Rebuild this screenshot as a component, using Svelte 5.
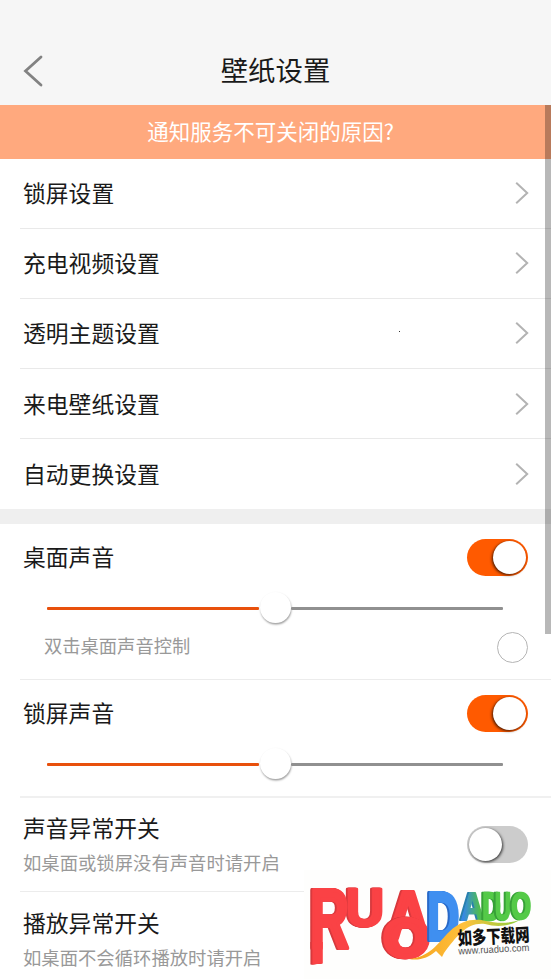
<script lang="ts">
	interface LogoLetter {
		char: string;
		tone: string;
		x: number;
		y: number;
		sx: number;
		sy: number;
		weight: number;
	}

	const links = ['锁屏设置', '充电视频设置', '透明主题设置', '来电壁纸设置', '自动更换设置'];

	let desktopSound = $state(true);
	let lockSound = $state(true);
	let soundFix = $state(false);
	let doubleTap = $state(false);

	// x / y is the baseline origin, sx / sy stretch a 100 unit glyph
	const letters: LogoLetter[] = [
		{ char: 'A', tone: 'red', x: 83.5, y: 68, sx: 0.58, sy: 0.66, weight: 6 },
		{ char: 'U', tone: 'red', x: 42, y: 56, sx: 0.53, sy: 0.53, weight: 5 },
		{ char: 'R', tone: 'red', x: 6, y: 78, sx: 0.54, sy: 0.83, weight: 5 },
		{ char: 'O', tone: 'red', x: 80, y: 86, sx: 0.58, sy: 0.51, weight: 11 },
		{ char: 'D', tone: 'blue', x: 123.5, y: 70, sx: 0.44, sy: 0.69, weight: 6 },
		{ char: 'A', tone: 'teal', x: 157, y: 50, sx: 0.32, sy: 0.38, weight: 5 },
		{ char: 'D', tone: 'green', x: 178.5, y: 50, sx: 0.25, sy: 0.38, weight: 7 },
		{ char: 'U', tone: 'green', x: 191, y: 50, sx: 0.22, sy: 0.38, weight: 6 },
		{ char: 'O', tone: 'green', x: 207.5, y: 49, sx: 0.25, sy: 0.37, weight: 7 }
	];
</script>

{#snippet toggle(on: boolean, label: string, flip: () => void)}
	<button class="toggle" class:on role="switch" aria-checked={on} aria-label={label} onclick={flip}>
		<span></span>
	</button>
{/snippet}

{#snippet slider()}
	<div class="slider">
		<span class="track filled"></span>
		<span class="thumb"></span>
		<span class="track"></span>
	</div>
{/snippet}

<main class="screen">
	<header>
		<svg class="back" viewBox="0 0 22 34" aria-hidden="true">
			<path d="M19 3 L3.5 17 L19 31" />
		</svg>
		<h1>壁纸设置</h1>
	</header>

	<div class="banner">通知服务不可关闭的原因?</div>

	<nav>
		{#each links as link}
			<div class="link">
				<span>{link}</span>
				<svg viewBox="0 0 14 24" aria-hidden="true"><path d="M1.2 1.8 L12.2 12 L1.2 22.2" /></svg>
			</div>
		{/each}
	</nav>

	<div class="gap"></div>

	<section class="sound desktop">
		<div class="line">
			<span>桌面声音</span>
			{@render toggle(desktopSound, '桌面声音', () => (desktopSound = !desktopSound))}
		</div>
		{@render slider()}
		<div class="option">
			<span>双击桌面声音控制</span>
			<button
				class="radio"
				class:checked={doubleTap}
				aria-label="双击桌面声音控制"
				onclick={() => (doubleTap = !doubleTap)}
			></button>
		</div>
	</section>

	<section class="sound lock">
		<div class="line">
			<span>锁屏声音</span>
			{@render toggle(lockSound, '锁屏声音', () => (lockSound = !lockSound))}
		</div>
		{@render slider()}
	</section>

	<section class="fix">
		<div>
			<p>声音异常开关</p>
			<small>如桌面或锁屏没有声音时请开启</small>
		</div>
		{@render toggle(soundFix, '声音异常开关', () => (soundFix = !soundFix))}
	</section>

	<section class="fix last">
		<div>
			<p>播放异常开关</p>
			<small>如桌面不会循环播放时请开启</small>
		</div>
	</section>

	<div class="scrollbar"></div>
	<i class="speck"></i>

	<svg class="logo" viewBox="0 0 247 109" aria-hidden="true">
		<defs>
			<linearGradient id="ribbon" x1="0" x2="1">
				<stop offset="0" stop-color="#f5a21f" />
				<stop offset="0.5" stop-color="#ffc13c" />
				<stop offset="1" stop-color="#8ccf3d" />
			</linearGradient>
			<linearGradient id="teal" x1="0" x2="1">
				<stop offset="0.1" stop-color="#3688e5" />
				<stop offset="0.8" stop-color="#4fbd50" />
			</linearGradient>
		</defs>
		{#each letters as l}
			<g class={l.tone}>
				<text transform="translate({l.x} {l.y}) scale({l.sx} {l.sy})" stroke-width={l.weight}>{l.char}</text>
				{#if l.char === 'R'}
					<path class="stem" d="M8.4 72 H18.8 V93.5 L8.4 94.5 Z" />
				{/if}
			</g>
		{/each}
		<path
			class="ribbon"
			d="M105 89 C126 87 134 73 145 62 C160 48 172 49 182 51 C195 54 206 53 216 50 C204 57 192 57 181 54 C163 52 153 66 140 83 L138 87 L132 81 C124 88 115 91 105 89 Z"
		/>
		<g transform="rotate(-3 154 76)">
			<text class="cn" transform="translate(154 75) scale(1 1.15)" textLength="72" lengthAdjust="spacingAndGlyphs">如多下载网</text>
			<text class="url" x="154" y="84.5" textLength="71" lengthAdjust="spacingAndGlyphs">www.ruaduo.com</text>
		</g>
	</svg>
</main>

<style>
	:global(body) {
		overflow: hidden;
	}

	.screen {
		position: relative;
		width: 551px;
		height: 979px;
		overflow: hidden;
		background: #fff;
		color: #1a1a1a;
		font: 22.8px/32px 'Noto Sans CJK SC', sans-serif;
	}

	header {
		display: grid;
		grid-template-columns: 80px 1fr 80px;
		align-items: center;
		height: 105px;
		padding-top: 36px;
		box-sizing: border-box;
		background: #f6f6f6;
	}

	.back {
		width: 22px;
		height: 34px;
		margin-left: 22px;
	}

	svg path {
		fill: none;
	}

	.back path {
		stroke: #828282;
		stroke-width: 2.8;
		stroke-linecap: round;
	}

	h1 {
		margin: 0 0 3px;
		font-size: 27.4px;
		font-weight: 400;
		line-height: 36px;
		text-align: center;
	}

	.banner {
		height: 53.5px;
		background: #ffa97e;
		color: #fff;
		font-size: 21.5px;
		line-height: 52px;
		text-align: center;
		padding-right: 10px;
	}

	.link {
		display: flex;
		align-items: center;
		justify-content: space-between;
		box-sizing: border-box;
		height: 70.2px;
		margin-left: 20px;
		padding: 0 22px 0 3px;
		border-bottom: 1px solid #e9e9e9;
	}

	.link:last-child {
		border-bottom: 0;
	}

	.link svg {
		width: 14px;
		height: 24px;
	}

	.link path {
		stroke: #b3b3b3;
		stroke-width: 2;
	}

	.gap {
		height: 14.5px;
		background: #efefef;
	}

	section {
		box-sizing: border-box;
		margin-left: 20px;
		padding: 0 23px 0 3px;
		border-bottom: 1px solid #ececec;
	}

	.sound {
		padding-top: 16px;
	}

	.desktop {
		height: 156px;
	}

	.lock {
		height: 118px;
		border-bottom: 2px solid #f0f0f0;
	}

	.line,
	.option {
		display: flex;
		align-items: center;
		justify-content: space-between;
	}

	.line {
		height: 36px;
	}

	.line > span {
		margin-bottom: 1px;
	}

	button {
		padding: 0;
		border: 0;
		flex: none;
	}

	.toggle {
		display: flex;
		width: 61px;
		height: 37px;
		box-sizing: border-box;
		padding: 2px;
		border-radius: 19px;
		background: #ccc;
	}

	.toggle span {
		width: 33px;
		height: 33px;
		border-radius: 50%;
		background: #fff;
		box-shadow: 1px 1px 3px rgb(0 0 0 / 0.75);
	}

	.toggle.on {
		justify-content: flex-end;
		background: #ff5a00;
	}

	.toggle.on span {
		box-shadow: -1px 1px 3px rgb(0 0 0 / 0.75);
	}

	.slider {
		display: flex;
		align-items: center;
		justify-content: space-between;
		height: 32px;
		margin: 17px 1px 0 24px;
		padding-right: 24px;
	}

	.track {
		width: 212px;
		height: 3px;
		border-radius: 1px;
		background: #909090;
	}

	.filled {
		background: #e8500c;
	}

	.thumb {
		width: 31px;
		height: 31px;
		margin-top: -2px;
		border-radius: 50%;
		background: #fff;
		box-shadow: 0.5px 1.5px 2px rgb(0 0 0 / 0.38);
	}

	.option {
		height: 32px;
		margin-top: 7px;
		padding-left: 21px;
		color: #999;
		font-size: 18.3px;
	}

	.option span {
		margin-bottom: 5px;
	}

	.radio {
		width: 31px;
		height: 31px;
		border: 1.5px solid #b5b5b5;
		border-radius: 50%;
		background: #fff;
	}

	.radio.checked {
		background: #ff5a00;
	}

	.fix {
		display: flex;
		align-items: center;
		justify-content: space-between;
		height: 94px;
	}

	.fix p {
		margin: 2px 0 0;
		line-height: 34px;
	}

	.fix small {
		display: block;
		color: #999;
		font-size: 18.35px;
		line-height: 34px;
	}

	.last {
		border: 0;
	}

	.scrollbar {
		position: absolute;
		top: 105px;
		right: 0;
		width: 6px;
		height: 529px;
		background: rgb(0 0 0 / 0.28);
	}

	.speck {
		position: absolute;
		top: 331px;
		left: 399px;
		width: 1px;
		height: 1px;
		background: #333;
	}

	.logo {
		position: absolute;
		right: 0;
		bottom: 0;
		width: 247px;
		height: 109px;
		background: #fefefd;
	}

	.logo text {
		font: 700 100px 'Liberation Sans', sans-serif;
		stroke-linejoin: round;
	}

	.red {
		filter: drop-shadow(-1px 0.4px 0 #dc3a3e) drop-shadow(-1px 0.4px 0 #d5363a);
	}

	.red text {
		fill: #fa4245;
		stroke: #fa4245;
	}

	.logo .stem {
		fill: #fa4245;
	}

	.blue {
		filter: drop-shadow(-1px 0.4px 0 #2869c8) drop-shadow(-1px 0.4px 0 #2869c8);
	}

	.blue text {
		fill: #3f8ff0;
		stroke: #3f8ff0;
	}

	.teal {
		filter: drop-shadow(-1.5px 0.4px 0 #287fae);
	}

	.teal text {
		fill: url(#teal);
		stroke: url(#teal);
	}

	.green {
		filter: drop-shadow(-1.5px 0.4px 0 #37a137);
	}

	.green text {
		fill: #55ca48;
		stroke: #55ca48;
	}

	.logo .ribbon {
		fill: url(#ribbon);
	}

	.logo text.cn {
		fill: #111;
		font: 900 16px 'Noto Sans CJK SC', sans-serif;
	}

	.logo text.url {
		fill: #555;
		font: 400 10px 'Liberation Sans', sans-serif;
	}
</style>
